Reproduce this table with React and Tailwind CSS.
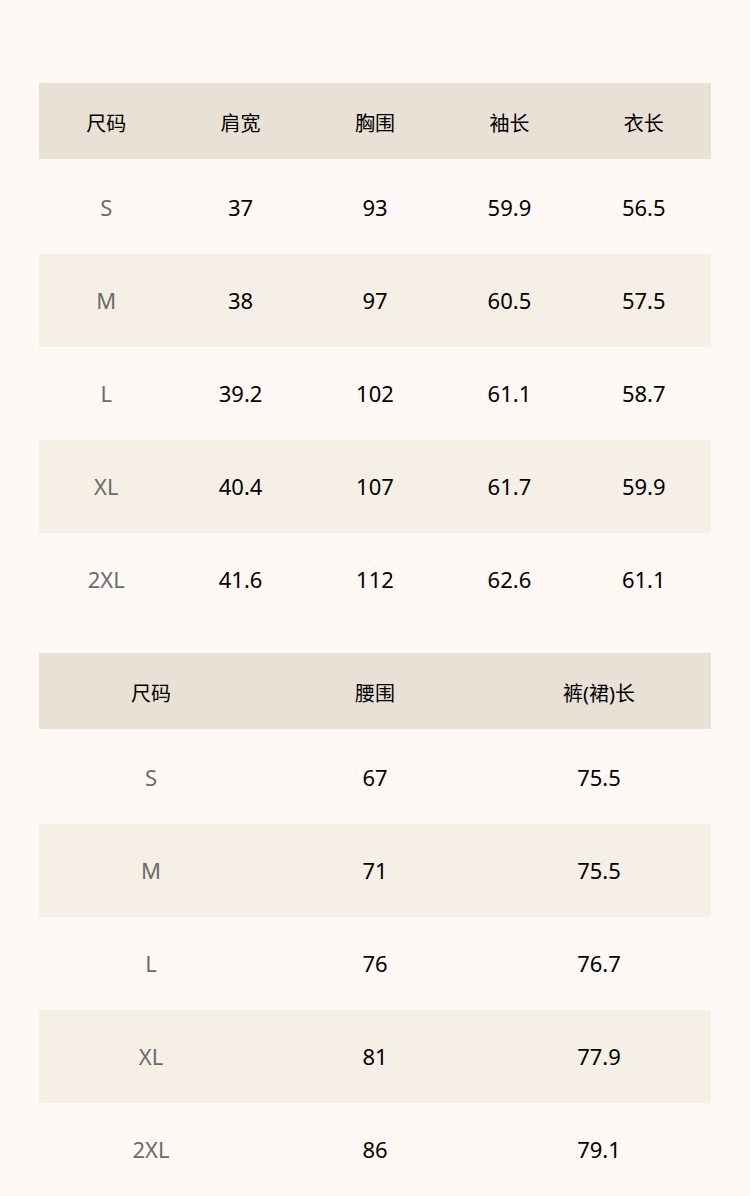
import React from "react";

const t1 = {
  head: ["尺码", "肩宽", "胸围", "袖长", "衣长"],
  rows: [
    ["S", "37", "93", "59.9", "56.5"],
    ["M", "38", "97", "60.5", "57.5"],
    ["L", "39.2", "102", "61.1", "58.7"],
    ["XL", "40.4", "107", "61.7", "59.9"],
    ["2XL", "41.6", "112", "62.6", "61.1"],
  ],
};
const t2 = {
  head: ["尺码", "腰围", "裤(裙)长"],
  rows: [
    ["S", "67", "75.5"],
    ["M", "71", "75.5"],
    ["L", "76", "76.7"],
    ["XL", "81", "77.9"],
    ["2XL", "86", "79.1"],
  ],
};

function Table({ data, cols }) {
  const grid = cols === 5 ? "grid grid-cols-5" : "grid grid-cols-3";
  return (
    <div className="flex flex-col">
      <div className={`${grid} h-[76px] items-center bg-[#e9e1d6] text-black text-[20px] pt-[6px]`}>
        {data.head.map((h, i) => (
          <div key={i} className="text-center">{h}</div>
        ))}
      </div>
      {data.rows.map((r, ri) => (
        <div
          key={ri}
          className={`${grid} ${ri === 0 ? "h-[95px] pt-[1px]" : "h-[93px] pb-[1px]"} items-center text-[22px] ${ri % 2 === 1 ? "bg-[#f6efe5]" : ""}`}
        >
          {r.map((c, ci) => (
            <div key={ci} className={`text-center ${ci === 0 ? "text-[#6b6b6b]" : "text-black"}`}>
              {c}
            </div>
          ))}
        </div>
      ))}
    </div>
  );
}

export default function App() {
  return (
    <div
      className="min-h-[1196px] bg-[#fef9f5] px-[39px] pt-[83px] flex flex-col gap-[27px]"
      style={{ fontFamily: '"Noto Sans", "Noto Sans CJK SC", sans-serif' }}
    >
      <Table data={t1} cols={5} />
      <Table data={t2} cols={3} />
    </div>
  );
}
